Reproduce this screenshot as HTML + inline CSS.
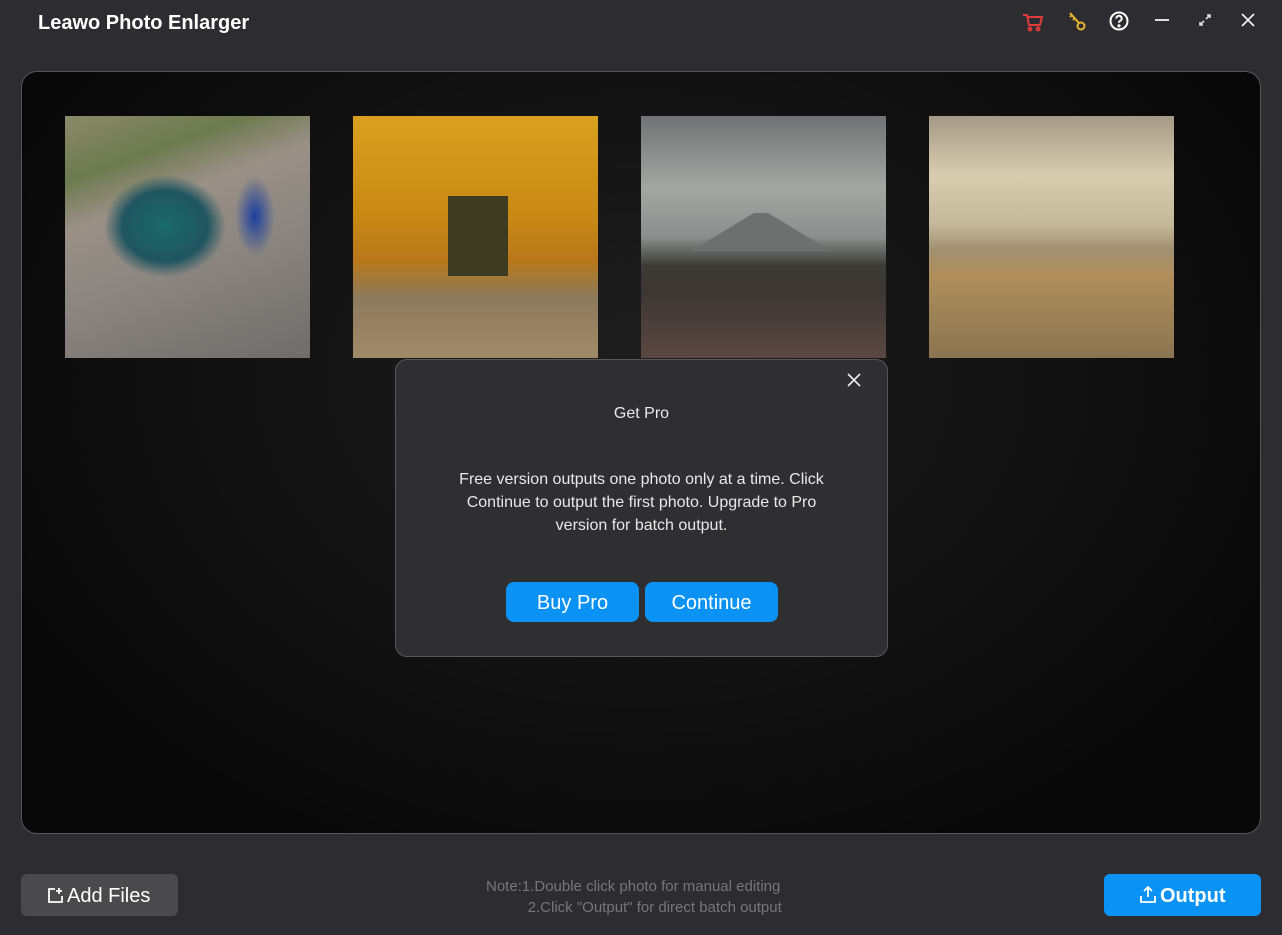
<!DOCTYPE html>
<html><head><meta charset="utf-8"><style>
*{margin:0;padding:0;box-sizing:border-box}
body{width:1282px;height:935px;background:#2c2c31;font-family:"Liberation Sans",sans-serif;position:relative;overflow:hidden;color:#fff}
.title{position:absolute;left:38px;top:12px;font-size:20px;font-weight:bold;color:#fff}
.ic{position:absolute;top:10px}
.main{position:absolute;left:21px;top:71px;width:1240px;height:763px;border:1px solid #55555a;border-radius:16px;background:radial-gradient(ellipse at 50% 40%,#1e1e1e 0%,#111 50%,#080808 80%);overflow:hidden}
.ph{position:absolute;top:44px;width:245px;height:242px}
.dlg{position:absolute;left:395px;top:359px;width:493px;height:298px;background:#2f2f31;border:1px solid #58585c;border-radius:12px;text-align:center}
.btn{position:absolute;top:222px;height:40px;background:#0a93f5;border-radius:8px;font-size:20px;line-height:42px;color:#fff}
.add{position:absolute;left:21px;top:874px;width:157px;height:42px;background:#4a4a4d;border-radius:6px;font-size:20px;line-height:44px;padding-left:46px}
.out{position:absolute;left:1104px;top:874px;width:157px;height:42px;background:#0a93f5;border-radius:6px;font-size:20px;font-weight:bold;line-height:44px;padding-left:56px}
.note{position:absolute;left:486px;top:876px;font-size:15px;color:#77777a;line-height:21px}
</style></head><body>
<div class="title">Leawo Photo Enlarger</div>
<svg class="ic" style="left:1021px" width="24" height="24" viewBox="0 0 24 24" fill="none" stroke="#e03a3a" stroke-width="2"><path d="M2 5h4l2 10h11l2-8H7"/><circle cx="9" cy="19" r="1.5"/><circle cx="17" cy="19" r="1.5"/></svg>
<svg class="ic" style="left:1065px" width="24" height="24" viewBox="0 0 24 24" fill="none" stroke="#e7b530" stroke-width="2"><path d="M5 3l9 10M7 5l-2 2M10 8l-2 2"/><circle cx="16" cy="16" r="3.5"/></svg>
<svg class="ic" style="left:1108px" width="22" height="22" viewBox="0 0 22 22" fill="none" stroke="#fff" stroke-width="2"><circle cx="11" cy="11" r="8.5"/><path d="M8.3 8.5a2.7 2.7 0 1 1 3.7 2.5c-.8.4-1 1-1 1.8"/><circle cx="11" cy="15.8" r=".6" fill="#fff"/></svg>
<div style="position:absolute;left:1155px;top:19px;width:14px;height:2px;background:#ddd"></div>
<svg class="ic" style="left:1197px;top:12px" width="16" height="16" viewBox="0 0 16 16" stroke="#ddd" stroke-width="1.6" fill="none"><path d="M3 13l4-4M9 7l4-4M3 10v3h3M10 3h3v3"/></svg>
<svg class="ic" style="left:1240px;top:12px" width="16" height="16" viewBox="0 0 16 16" stroke="#eee" stroke-width="1.8"><path d="M2 2l12 12M14 2L2 14"/></svg>
<div class="main">
<div class="ph" style="left:43px;background:linear-gradient(160deg,#8b8a6a 0%,#6d7a4e 20%,#9a9086 35%,#8a8580 60%,#6f6c6a 100%)"><div style="position:absolute;left:40px;top:60px;width:120px;height:100px;background:radial-gradient(ellipse,#1a6a6a 0%,#1f5560 50%,transparent 72%)"></div><div style="position:absolute;left:170px;top:60px;width:40px;height:80px;background:radial-gradient(ellipse,#1b3fa0 0%,transparent 70%)"></div></div>
<div class="ph" style="left:331px;background:linear-gradient(180deg,#d9a020 0%,#c98a14 40%,#b8781a 60%,#8d7a5c 75%,#a08a68 100%)"><div style="position:absolute;left:95px;top:80px;width:60px;height:80px;background:#3d3b22"></div></div>
<div class="ph" style="left:619px;background:linear-gradient(180deg,#6f7373 0%,#a3a7a4 30%,#8a8e8c 50%,#3b3b35 62%,#3c3632 72%,#5a4842 100%)"><div style="position:absolute;left:50px;top:95px;width:140px;height:40px;background:#6e7070;clip-path:polygon(0 100%,45% 5%,55% 5%,100% 100%)"></div></div>
<div class="ph" style="left:907px;background:linear-gradient(180deg,#a59a86 0%,#d8ccb0 25%,#c4b89a 45%,#a09070 55%,#b08f5c 65%,#8a7450 100%)"></div>
</div>
<div class="dlg">
<svg style="position:absolute;right:26px;top:13px" width="14" height="14" viewBox="0 0 14 14" stroke="#eee" stroke-width="1.6"><path d="M1 1l12 12M13 1L1 13"/></svg>
<div style="position:absolute;top:45px;width:100%;font-size:16px;color:#e8e8e8">Get Pro</div>
<div style="position:absolute;top:108px;left:48px;right:48px;font-size:16px;line-height:23px;color:#e8e8e8">Free version outputs one photo only at a time. Click Continue to output the first photo. Upgrade to Pro version for batch output.</div>
<div class="btn" style="left:110px;width:133px">Buy Pro</div>
<div class="btn" style="left:249px;width:133px">Continue</div>
</div>
<div class="add"><svg style="position:absolute;left:26px;top:13px" width="17" height="17" viewBox="0 0 17 17" fill="none" stroke="#fff" stroke-width="1.8"><path d="M8 2H2v13h13V9M12 1v6M9 4h6"/></svg>Add Files</div>
<div class="note">Note:1.Double click photo for manual editing<br>&nbsp;&nbsp;&nbsp;&nbsp;&nbsp;&nbsp;&nbsp;&nbsp;&nbsp;&nbsp;2.Click "Output" for direct batch output</div>
<div class="out"><svg style="position:absolute;left:36px;top:12px" width="16" height="17" viewBox="0 0 16 17" fill="none" stroke="#fff" stroke-width="1.8"><path d="M8 11V2M4 5l4-4 4 4M1 10v6h14v-6"/></svg>Output</div>
</body></html>
